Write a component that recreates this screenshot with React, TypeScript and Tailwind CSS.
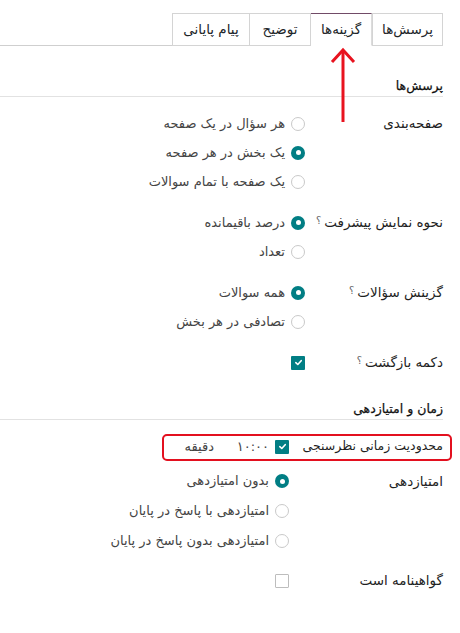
import React from "react";

const font = { fontFamily: '"DejaVu Sans", "Noto Sans", sans-serif' };

function Radio({ checked }: { checked?: boolean }) {
  return checked ? (
    <span className="flex w-[14px] h-[14px] shrink-0 items-center justify-center rounded-full bg-[#017e84]">
      <span className="w-[5px] h-[5px] rounded-full bg-white" />
    </span>
  ) : (
    <span className="block w-[14px] h-[14px] shrink-0 rounded-full border border-[#c9c9c9] bg-white" />
  );
}

function Check({ checked }: { checked?: boolean }) {
  return checked ? (
    <span className="flex w-[14px] h-[14px] shrink-0 items-center justify-center rounded-[1px] bg-[#017e84]">
      <svg width="9" height="9" viewBox="0 0 10 10">
        <path d="M2 5.2 L4.2 7.2 L8 3" stroke="white" strokeWidth="1.8" fill="none" strokeLinecap="round" strokeLinejoin="round" />
      </svg>
    </span>
  ) : (
    <span className="block w-[14px] h-[14px] shrink-0 rounded-[1px] border border-[#bdbdbd] bg-white" />
  );
}

function Option({ checked, text, h }: { checked?: boolean; text: string; h: string }) {
  return (
    <div className={`flex items-center gap-[6px] ${h}`}>
      <Radio checked={checked} />
      <span className="text-[13px] text-[#444444] whitespace-nowrap">{text}</span>
    </div>
  );
}

function Label({ text, help }: { text: string; help?: boolean }) {
  return (
    <div className="flex h-[29px] items-center whitespace-nowrap text-[13.5px] text-[#1f1f1f]">
      <span>{text}</span>
      {help && <sup className="mr-[3px] text-[10px] text-[#666] relative -top-[2px]">؟</sup>}
    </div>
  );
}

function SectionHeader({ text, mt }: { text: string; mt: string }) {
  return (
    <div className={`${mt} h-[21px] flex items-center border-b border-[#e2e2e2] text-[12.5px] text-[#111111]`} style={{ WebkitTextStroke: "0.25px #111" }}>
      {text}
    </div>
  );
}

export default function App() {
  const tabs = [
    { t: "پرسش‌ها", w: "w-[71px]" },
    { t: "گزینه‌ها", w: "w-[62px]", active: true },
    { t: "توضیح", w: "w-[62px]" },
    { t: "پیام پایانی", w: "w-[78px]" },
  ];
  return (
    <div dir="rtl" style={font} className="relative w-[460px] h-[633px] overflow-hidden bg-white">
      <div className="pr-[17px]">
        {/* tabs */}
        <div className="mt-[13px] flex h-[33px] border-b border-[#cfcfcf]">
          {tabs.map((tab) => (
            <div
              key={tab.t}
              className={`${tab.w} -mb-px flex items-center justify-center whitespace-nowrap text-[13.5px] text-[#212529] border ${
                tab.active
                  ? "border-[#dcdcdc] border-t-[#714b67] border-b-white bg-white"
                  : "border-[#d4d4d4] -mr-px first:mr-0"
              }`}
            >
              {tab.t}
            </div>
          ))}
        </div>

        <SectionHeader text="پرسش‌ها" mt="mt-[30px]" />

        {/* section 1 */}
        <div className="grid grid-cols-[138px_1fr]">
          <div className="mt-[12px]"><Label text="صفحه‌بندی" /></div>
          <div className="mt-[12px]">
            <Option text="هر سؤال در یک صفحه" h="h-[29px]" />
            <Option checked text="یک بخش در هر صفحه" h="h-[29px]" />
            <Option text="یک صفحه با تمام سوالات" h="h-[29px]" />
          </div>

          <div className="mt-[12px]"><Label text="نحوه نمایش پیشرفت" help /></div>
          <div className="mt-[12px]">
            <Option checked text="درصد باقیمانده" h="h-[29px]" />
            <Option text="تعداد" h="h-[29px]" />
          </div>

          <div className="mt-[12px]"><Label text="گزینش سؤالات" help /></div>
          <div className="mt-[12px]">
            <Option checked text="همه سوالات" h="h-[29px]" />
            <Option text="تصادفی در هر بخش" h="h-[29px]" />
          </div>

          <div className="mt-[12px]"><Label text="دکمه بازگشت" help /></div>
          <div className="mt-[12px] flex h-[29px] items-center">
            <Check checked />
          </div>
        </div>

        <SectionHeader text="زمان و امتیازدهی" mt="mt-[22px]" />

        {/* section 2 */}
        <div className="grid grid-cols-[154px_1fr]">
          <div className="relative col-span-2 mt-[12px] grid grid-cols-[154px_1fr]">
            <div className="absolute -right-[9px] top-[2px] h-[27px] w-[290px] rounded-[5px] border-2 border-[#e3101f] pointer-events-none" />
            <div className="flex h-[29px] items-center whitespace-nowrap text-[12.5px] text-[#1f1f1f]">محدودیت زمانی نظرسنجی</div>
            <div className="flex h-[29px] items-center">
              <Check checked />
              <span className="mr-[6px] w-[55px] text-[13px] text-[#444444]">۱۰:۰۰</span>
              <span className="text-[13px] text-[#444444]">دقیقه</span>
            </div>
          </div>

          <div className="mt-[5px]"><div className="flex h-[30px] items-center text-[13.5px] text-[#1f1f1f]">امتیازدهی</div></div>
          <div className="mt-[5px]">
            <Option checked text="بدون امتیازدهی" h="h-[30px]" />
            <Option text="امتیازدهی با پاسخ در پایان" h="h-[30px]" />
            <Option text="امتیازدهی بدون پاسخ در پایان" h="h-[30px]" />
          </div>

          <div className="mt-[10px]"><Label text="گواهینامه است" /></div>
          <div className="mt-[10px] flex h-[29px] items-center">
            <Check />
          </div>
        </div>
      </div>

      {/* red arrow */}
      <svg className="absolute left-0 top-0 pointer-events-none" width="460" height="633">
        <path d="M343 122 L343 51" stroke="#e8131f" strokeWidth="3" fill="none" />
        <path d="M332 62 L343 50 L354 62" stroke="#e8131f" strokeWidth="3" fill="none" strokeLinejoin="miter" />
      </svg>
    </div>
  );
}
